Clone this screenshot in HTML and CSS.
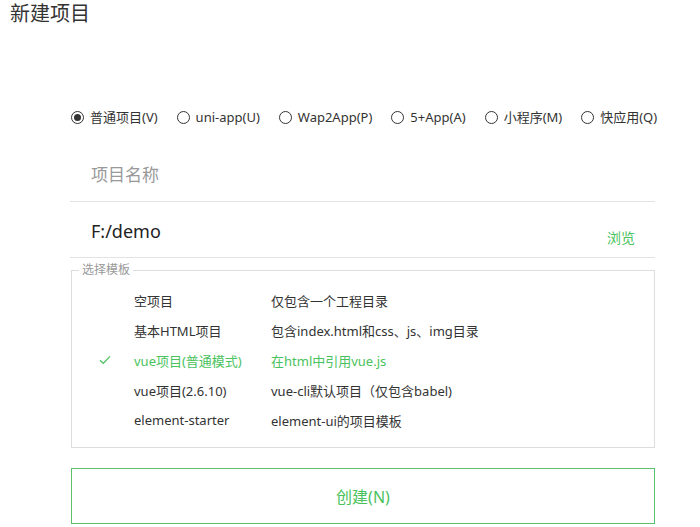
FILE: index.html
```html
<!DOCTYPE html>
<html lang="zh-CN">

<head>
    <meta charset="UTF-8">
    <meta name="viewport" content="width=device-width, initial-scale=1.0">
    <title>新建项目</title>
    <link rel="stylesheet" href="styles.css">
</head>

<body>
    <h1 class="title">新建项目</h1>
    <div class="form">
        <ul class="types">
            <li class="on"><i class="radio"></i>普通项目(V)</li>
            <li><i class="radio"></i>uni-app(U)</li>
            <li><i class="radio"></i>Wap2App(P)</li>
            <li><i class="radio"></i>5+App(A)</li>
            <li><i class="radio"></i>小程序(M)</li>
            <li><i class="radio"></i>快应用(Q)</li>
        </ul>
        <div class="field name">
            <span class="holder">项目名称</span>
        </div>
        <div class="field path">
            <span class="val">F:/demo</span>
            <a class="browse">浏览</a>
        </div>
        <fieldset class="tpl">
            <legend>选择模板</legend>
            <ul class="tpl-list">
                <li><span class="mark"></span><span class="c1">空项目</span><span>仅包含一个工程目录</span></li>
                <li><span class="mark"></span><span class="c1">基本HTML项目</span><span>包含index.html和css、js、img目录</span></li>
                <li class="cur">
                    <span class="mark">
                        <svg width="12" height="10" viewBox="0 0 12 10"><path d="M1 5.2 L4.3 8.4 L11 1.4" fill="none" stroke="#4ac25d" stroke-width="1.3"/></svg>
                    </span>
                    <span class="c1">vue项目(普通模式)</span><span>在html中引用vue.js</span>
                </li>
                <li><span class="mark"></span><span class="c1">vue项目(2.6.10)</span><span>vue-cli默认项目（仅包含babel)</span></li>
                <li><span class="mark"></span><span class="c1">element-starter</span><span>element-ui的项目模板</span></li>
            </ul>
        </fieldset>
        <div class="create">创建(N)</div>
    </div>
</body>

</html>
```

FILE: styles.css
```css
body {
    margin: 0;
    font-family: "Noto Sans", "Noto Sans CJK SC", sans-serif;
    color: #333;
    background: #fff;
}

ul {
    margin: 0;
    padding: 0;
    list-style: none;
}

.title {
    margin: 0;
    padding: 0 0 0 10px;
    height: 30px;
    line-height: 28px;
    font-size: 20px;
    font-weight: normal;
    color: #333;
}

.form {
    width: 585px;
    margin-left: 70px;
}

.types {
    display: flex;
    margin-top: 77px;
    height: 20px;
    line-height: 20px;
    font-size: 13px;
    white-space: nowrap;
}

.types li {
    display: flex;
    align-items: center;
    flex-shrink: 0;
    margin-right: 18px;
}

.radio {
    width: 11px;
    height: 11px;
    border: 1px solid #333;
    border-radius: 50%;
    margin: 0 6px 0 1px;
    position: relative;
}

.on .radio::after {
    content: "";
    position: absolute;
    left: 2px;
    top: 2px;
    width: 7px;
    height: 7px;
    border-radius: 50%;
    background: #333;
}

.field {
    height: 55px;
    border-bottom: 1px solid #e3e3e3;
    display: flex;
    padding-left: 21px;
}

.name {
    margin-top: 19px;
    align-items: center;
}

.holder {
    font-size: 17px;
    color: #999;
}

.path {
    align-items: center;
}

.val {
    font-size: 18px;
    color: #222;
    flex: 1;
    margin-top: 2px;
}

.browse {
    font-size: 14px;
    color: #4ac25d;
    margin: 14px 20px 0 0;
}

.tpl {
    margin: 4px 0 0 1px;
    padding: 7px 0 12px;
    border: 1px solid #ddd;
    min-width: 0;
}

.tpl legend {
    font-size: 12px;
    color: #999;
    padding: 0 3px;
    margin-left: 7px;
    line-height: 16px;
}

.tpl-list li {
    display: flex;
    align-items: center;
    height: 30px;
    font-size: 13px;
    color: #333;
}

.mark {
    width: 62px;
    display: flex;
    justify-content: flex-end;
}

.mark svg {
    margin-right: 23px;
}

.c1 {
    width: 137px;
}

.tpl-list .cur {
    color: #4ac25d;
}

.create {
    margin: 20px 0 0 1px;
    height: 54px;
    border: 1px solid #5cc16c;
    display: flex;
    align-items: center;
    justify-content: center;
    font-size: 16px;
    color: #4ac25d;
}
```
